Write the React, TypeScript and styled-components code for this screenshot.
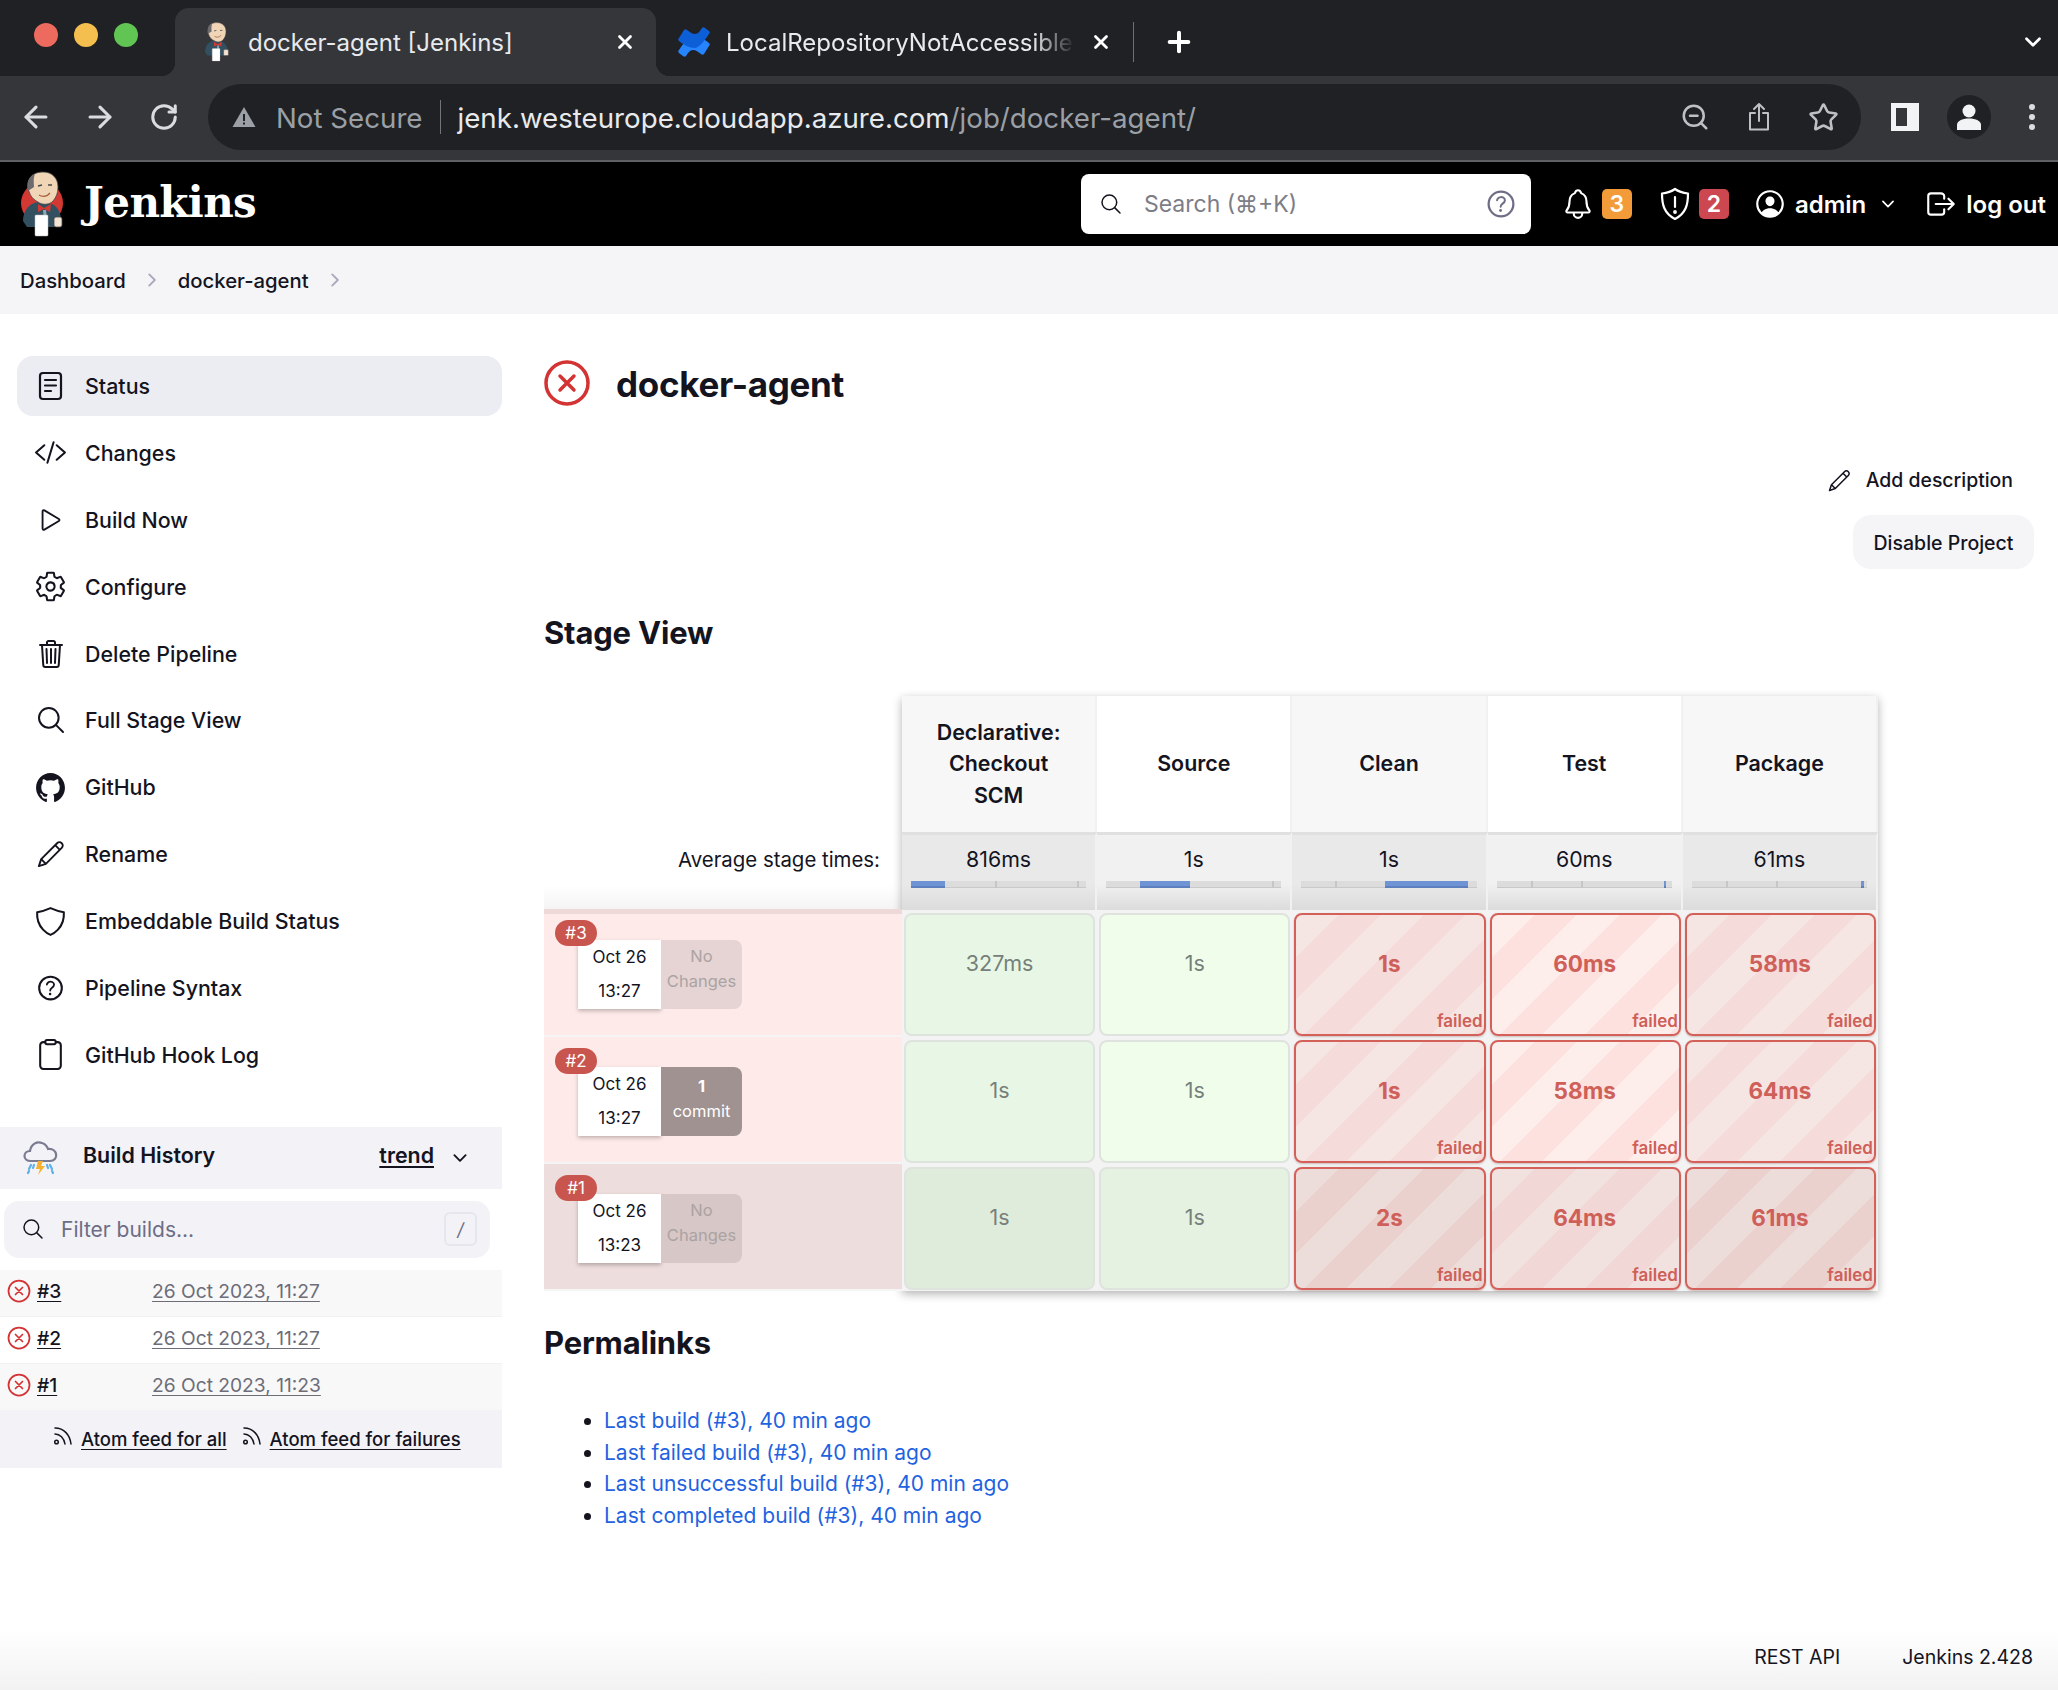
import React from 'react';
import styled, { createGlobalStyle } from 'styled-components';
import {
  IoCodeSlashOutline,
  IoPlayOutline,
  IoSettingsOutline,
  IoTrashOutline,
  IoSearchOutline,
  IoLogoGithub,
  IoShieldOutline,
  IoHelpCircleOutline,
  IoClipboardOutline,
  IoCloseCircleOutline,
  IoNotificationsOutline,
  IoPersonCircleOutline,
  IoLogOutOutline,
  IoChevronDownOutline,
  IoChevronForwardOutline,
} from 'react-icons/io5';
import { ArrowLeft, ArrowRight, RotateCw, ZoomOut, Star, X, Plus, ChevronDown } from 'lucide-react';

const GlobalStyle = createGlobalStyle`
  html, body {
    margin: 0;
    padding: 0;
    background: #fff;
  }
  body {
    font-family: Inter, "Liberation Sans", sans-serif;
    color: #14141f;
  }
  * {
    box-sizing: border-box;
  }
`;

const Page = styled.div`
  width: 2058px;
  height: 1690px;
  display: flex;
  flex-direction: column;
  overflow: hidden;
`;

// Browser chrome
const TabStrip = styled.div`
  height: 76px;
  flex: none;
  background: #202124;
  display: flex;
  align-items: flex-end;
  color: #fff;
`;

const TrafficLights = styled.div`
  width: 175px;
  height: 68px;
  flex: none;
  padding: 15px 0 0 34px;
  display: flex;
  gap: 16px;
`;

const Light = styled.span<{ $color: string }>`
  width: 24px;
  height: 24px;
  border-radius: 50%;
  background: ${(p) => p.$color};
`;

const ActiveTab = styled.div`
  position: relative;
  width: 481px;
  height: 68px;
  flex: none;
  padding: 0 20px 0 27px;
  background: #35363a;
  border-radius: 14px 14px 0 0;
  display: flex;
  align-items: center;
  gap: 16px;
  &::before,
  &::after {
    content: '';
    position: absolute;
    bottom: 0;
    width: 14px;
    height: 14px;
  }
  &::before {
    left: -14px;
    background: radial-gradient(circle at 0 0, #202124 14px, #35363a 14.5px);
  }
  &::after {
    right: -14px;
    background: radial-gradient(circle at 100% 0, #202124 14px, #35363a 14.5px);
  }
`;

const InactiveTab = styled.div`
  width: 477px;
  height: 68px;
  flex: none;
  padding: 0 21px 0 21px;
  display: flex;
  align-items: center;
  gap: 15px;
`;

const TabTitle = styled.span`
  flex: 1;
  min-width: 0;
  font-size: 24px;
  white-space: nowrap;
  overflow: hidden;
  color: #e8eaed;
`;

const FadedTabTitle = styled(TabTitle)`
  mask-image: linear-gradient(to right, #000 88%, transparent 100%);
`;

const TabSeparator = styled.span`
  width: 1px;
  height: 40px;
  margin-bottom: 14px;
  flex: none;
  background: #6e7075;
`;

const NewTab = styled.span`
  width: 90px;
  height: 68px;
  flex: none;
  display: flex;
  align-items: center;
  justify-content: center;
`;

const TabListChevron = styled.span`
  margin-left: auto;
  height: 68px;
  padding-right: 12px;
  display: flex;
  align-items: center;
`;

const Toolbar = styled.div`
  height: 86px;
  flex: none;
  padding: 8px 0 10px 20px;
  background: #35363a;
  border-bottom: 2px solid #5f6064;
  display: flex;
  align-items: stretch;
  color: #dadce0;
`;

const NavButton = styled.span`
  width: 64px;
  margin-left: -16px;
  margin-right: 16px;
  flex: none;
  display: flex;
  align-items: center;
  justify-content: center;
`;

const Omnibox = styled.div`
  width: 1653px;
  flex: none;
  margin-left: -4px;
  border-radius: 34px;
  background: #202124;
  padding: 0 22px 0 24px;
  display: flex;
  align-items: center;
  font-size: 27.7px;
  white-space: nowrap;
`;

const NotSecure = styled.span`
  margin: 1px 0 0 20px;
  color: #9aa0a6;
`;

const OmniDivider = styled.span`
  width: 1px;
  height: 34px;
  margin: 0 17px;
  background: #70757a;
`;

const UrlHost = styled.span`
  margin-top: 1px;
  color: #e8eaed;
`;

const UrlPath = styled.span`
  margin-top: 1px;
  color: #9aa0a6;
`;

const OmniActions = styled.span`
  margin-left: auto;
  display: flex;
  align-items: center;
  gap: 37px;
  color: #bdc1c6;
`;

const ToolbarRight = styled.div`
  margin-left: 30px;
  display: flex;
  align-items: center;
  gap: 28px;
`;

const ProfileCircle = styled.span`
  width: 44px;
  height: 44px;
  border-radius: 50%;
  background: #202124;
  display: flex;
  align-items: center;
  justify-content: center;
`;

const DotsSlot = styled.span`
  margin-left: 9px;
  display: flex;
`;

// Jenkins header
const Header = styled.header`
  height: 84px;
  flex: none;
  background: #000;
  color: #fff;
  display: flex;
  align-items: center;
  padding: 0 12px 0 18px;
`;

const BrandName = styled.span`
  margin: -3px 0 0 16px;
  font-family: "DejaVu Serif", "Liberation Serif", serif;
  font-weight: 700;
  font-size: 42px;
  letter-spacing: -0.6px;
`;

const SearchBox = styled.div`
  margin-left: auto;
  margin-right: 30px;
  width: 450px;
  height: 60px;
  border-radius: 8px;
  background: #fff;
  padding: 0 12px 0 18px;
  display: flex;
  align-items: center;
  gap: 21px;
  color: #14141f;
`;

const SearchHint = styled.span`
  flex: 1;
  font-size: 23px;
  color: #7d7d85;
`;

const HeaderGroup = styled.div<{ $after?: number; $gap?: number }>`
  display: flex;
  align-items: center;
  gap: ${(p) => p.$gap ?? 8}px;
  margin-right: ${(p) => p.$after ?? 0}px;
  font-size: 24px;
  font-weight: 600;
`;

const MenuChevron = styled.span`
  margin-left: 5px;
  display: flex;
`;

const CountBadge = styled.span<{ $color: string }>`
  width: 30px;
  height: 30px;
  border-radius: 5px;
  background: ${(p) => p.$color};
  display: flex;
  align-items: center;
  justify-content: center;
  font-size: 23px;
  font-weight: 600;
`;

const Breadcrumbs = styled.nav`
  height: 68px;
  flex: none;
  background: #f5f5f7;
  padding-left: 20px;
  display: flex;
  align-items: center;
  font-size: 20.3px;
  font-weight: 450;
`;

const CrumbSep = styled.span`
  width: 52px;
  display: flex;
  justify-content: center;
  color: #a9a9bd;
`;

// Page body
const Body = styled.div`
  flex: 1;
  min-height: 0;
  display: flex;
`;

const Sidebar = styled.aside`
  width: 502px;
  flex: none;
  padding-top: 42px;
`;

const Nav = styled.nav`
  margin-left: 17px;
  display: flex;
  flex-direction: column;
  gap: 6.9px;
`;

const NavItem = styled.a<{ $active?: boolean }>`
  height: 60px;
  padding-left: 17px;
  display: flex;
  align-items: center;
  gap: 18px;
  border-radius: 16px;
  background: ${(p) => (p.$active ? '#ecedf2' : 'transparent')};
  font-size: 21.4px;
  font-weight: 500;
  color: #14141f;
`;

const NavIcon = styled.span`
  width: 33px;
  height: 33px;
  flex: none;
  display: flex;
  align-items: center;
  justify-content: center;
`;

const HistoryBar = styled.div`
  margin-top: 42px;
  height: 62px;
  padding: 0 32px 0 23px;
  background: #f2f2f7;
  display: flex;
  align-items: center;
  font-size: 21.4px;
  font-weight: 600;
`;

const HistoryTitle = styled.span`
  margin: -5px 0 0 24px;
`;

const TrendLink = styled.a`
  margin: -5px 16px 0 auto;
  text-decoration: underline;
  text-underline-offset: 3px;
`;

const FilterBox = styled.div`
  width: 486px;
  height: 57px;
  margin: 12px 0 12px 4px;
  padding: 0 13px 0 17px;
  border-radius: 15px;
  background: #f2f2f7;
  display: flex;
  align-items: center;
  gap: 16px;
`;

const FilterHint = styled.span`
  flex: 1;
  font-size: 21px;
  color: #6d6d85;
`;

const SlashKey = styled.span`
  width: 33px;
  height: 34px;
  border: 2px solid #e6e6ef;
  border-radius: 6px;
  display: flex;
  align-items: center;
  justify-content: center;
  font-size: 18px;
  font-style: italic;
  color: #6d6d85;
`;

const BuildRow = styled.div<{ $shaded: boolean }>`
  height: 47px;
  padding: 0 0 3px 5px;
  display: flex;
  align-items: center;
  background: ${(p) => (p.$shaded ? '#f8f8f8' : '#fff')};
  border-bottom: 1px solid #f2f2f4;
  font-size: 19.2px;
`;

const BuildLink = styled.a`
  width: 115px;
  margin-left: 4px;
  font-weight: 500;
  text-decoration: underline;
  text-underline-offset: 3px;
`;

const BuildDate = styled.a`
  color: #6d6d78;
  text-decoration: underline;
  text-underline-offset: 3px;
`;

const FeedBar = styled.div`
  height: 57px;
  padding-left: 53px;
  background: #f2f2f7;
  display: flex;
  align-items: center;
  font-size: 18.5px;
  font-weight: 450;
`;

const FeedLink = styled.a<{ $gap?: number }>`
  margin-left: 8px;
  margin-right: ${(p) => p.$gap ?? 0}px;
  text-decoration: underline;
  text-underline-offset: 3px;
`;

const FeedGlyph = styled.span`
  margin-top: -7px;
  display: flex;
`;

const Main = styled.main`
  margin-left: 42px;
  flex: 1;
  min-width: 0;
  padding: 47px 24px 0 0;
`;

const TitleRow = styled.div`
  height: 44px;
  display: flex;
  align-items: center;
  gap: 27px;
`;

const TitleGlyph = styled.span`
  width: 45px;
  display: flex;
  justify-content: center;
`;

const JobTitle = styled.h1`
  margin: 2px 0 0;
  font-size: 35px;
  font-weight: 700;
  letter-spacing: -0.3px;
`;

const AddDescription = styled.a`
  margin-top: 60px;
  height: 30px;
  padding-right: 21px;
  display: flex;
  justify-content: flex-end;
  align-items: center;
  gap: 15px;
  font-size: 19.4px;
  font-weight: 450;
`;

const ActionRow = styled.div`
  margin-top: 20px;
  display: flex;
  justify-content: flex-end;
`;

const DisableButton = styled.button`
  width: 181px;
  height: 54px;
  padding-top: 2px;
  border: none;
  border-radius: 18px;
  background: #f5f5f7;
  color: #14141f;
  font-family: inherit;
  font-size: 19.5px;
  font-weight: 450;
`;

const SectionTitle = styled.h2<{ $top: number }>`
  margin: ${(p) => p.$top}px 0 0;
  height: 40px;
  line-height: 40px;
  font-size: 31px;
  font-weight: 700;
  letter-spacing: -0.2px;
`;

// Stage view
const StageView = styled.div`
  margin-top: 43px;
  display: flex;
`;

const BuildColumn = styled.div`
  width: 358px;
  flex: none;
`;

const HeaderSpacer = styled.div`
  height: 136px;
`;

const AverageLabel = styled.div`
  height: 77px;
  padding: 15px 22px 0 0;
  text-align: right;
  font-size: 20.4px;
  background: linear-gradient(to bottom, #fff 70%, #f4f4f4 100%);
`;

const BuildHead = styled.div<{ $tone: string; $first: boolean }>`
  position: relative;
  height: ${(p) => (p.$first ? 128 : 127)}px;
  padding: ${(p) => (p.$first ? 26 : 30)}px 0 0 34px;
  background: ${(p) => p.$tone};
  border-top: ${(p) => (p.$first ? '5px solid #ecd9d8' : 'none')};
  border-bottom: 2px solid #f5f5f5;
  display: flex;
  align-items: flex-start;
`;

const BuildBadge = styled.span<{ $first: boolean }>`
  position: absolute;
  left: 11px;
  top: ${(p) => (p.$first ? 6 : 11)}px;
  width: 42px;
  height: 26px;
  border-radius: 13px;
  background: #c8564f;
  color: #fff;
  font-size: 17px;
  display: flex;
  align-items: center;
  justify-content: center;
  z-index: 1;
`;

const DateBox = styled.div`
  width: 83px;
  height: 69px;
  background: #fff;
  box-shadow: 0 2px 4px rgba(0, 0, 0, 0.25);
  display: flex;
  flex-direction: column;
  align-items: center;
  font-size: 17px;
  line-height: 34px;
`;

const ChangesBox = styled.div<{ $bg: string; $strong?: boolean }>`
  width: 81px;
  height: 69px;
  padding-top: ${(p) => (p.$strong ? 7 : 4)}px;
  background: ${(p) => p.$bg};
  border-radius: 0 8px 8px 0;
  color: ${(p) => (p.$strong ? '#fff' : '#aba3a2')};
  font-size: 16.5px;
  line-height: 25px;
  text-align: center;
`;

const StagePanel = styled.div`
  width: 976px;
  flex: none;
  display: grid;
  grid-template-columns: repeat(5, 1fr);
  grid-template-rows: 136px 78px repeat(3, 127px);
  background: #f3f3f3;
  box-shadow: 0 3px 9px rgba(0, 0, 0, 0.3);
`;

const StageHead = styled.div<{ $odd: boolean }>`
  padding: 0 30px;
  background: ${(p) => (p.$odd ? '#f7f7f7' : '#fff')};
  border-right: 2px solid #f1f1f1;
  display: flex;
  align-items: center;
  justify-content: center;
  text-align: center;
  font-size: 21.4px;
  font-weight: 600;
  line-height: 31.5px;
`;

const AvgCell = styled.div<{ $odd: boolean }>`
  padding: 11px 9px 0;
  border-top: 3px solid #e0e0e0;
  border-right: 2px solid #f1f1f1;
  background: linear-gradient(
    to bottom,
    ${(p) => (p.$odd ? '#e9e9e9' : '#f1f1f1')} 65%,
    #dcdcdc 100%
  );
  text-align: center;
  font-size: 21.3px;
`;

const TimeBar = styled.div`
  position: relative;
  height: 7px;
  margin-top: 9px;
  background: #dcdcdc;
  box-shadow: inset 0 -1px 0 #c9c9c9;
`;

const TimeFill = styled.span<{ $left: number; $width: number }>`
  position: absolute;
  top: 0;
  bottom: 0;
  left: ${(p) => p.$left}px;
  width: ${(p) => p.$width}px;
  background: #6f94d6;
  box-shadow: inset 0 -2px 0 #5d7fbd;
`;

const TimeTick = styled.span<{ $left: number }>`
  position: absolute;
  top: 0;
  bottom: 0;
  left: ${(p) => p.$left}px;
  width: 2px;
  background: #c6c6c6;
`;

const CellSlot = styled.div`
  padding: 3px 2px 1px;
  min-width: 0;
`;

const SuccessCell = styled.div<{ $bg: string }>`
  height: 123px;
  padding-top: 35px;
  border-radius: 8px;
  background: ${(p) => p.$bg};
  border: 2px solid #dfe3dd;
  text-align: center;
  font-size: 21.5px;
  color: #76807a;
`;

const FailedCell = styled.div<{ $a: string; $b: string }>`
  height: 123px;
  padding: 35px 1px 1px 0;
  border-radius: 8px;
  background: repeating-linear-gradient(135deg, ${(p) => p.$a} 0 30px, ${(p) => p.$b} 30px 60px);
  border: 2px solid #d4605a;
  box-shadow: 0 1px 2px rgba(120, 60, 60, 0.3);
  display: flex;
  flex-direction: column;
  color: #cf5f59;
  font-weight: 600;
`;

const FailedTime = styled.span`
  text-align: center;
  font-size: 22.5px;
  font-weight: 700;
`;

const FailedLabel = styled.span`
  margin-top: auto;
  text-align: right;
  font-size: 17px;
  line-height: 24px;
`;

// Permalinks + footer
const LinkList = styled.ul`
  margin: 42px 0 0;
  padding-left: 60px;
  font-size: 21px;
  line-height: 31.5px;
`;

const PermaLink = styled.a`
  color: #1f63e0;
`;

const Footer = styled.footer`
  height: 60px;
  flex: none;
  padding: 0 25px 6px 0;
  background: linear-gradient(to bottom, #fff 0%, #f2f2f2 100%);
  display: flex;
  align-items: center;
  justify-content: flex-end;
  gap: 62px;
  font-size: 19.5px;
`;

const StatusIcon = () => (
  <svg width="25" height="30" viewBox="0 0 25 30" fill="none" stroke="currentColor" strokeWidth="2.2" strokeLinecap="round">
    <rect x="2" y="2" width="21" height="26" rx="3" />
    <path d="M7 9h11M7 14.5h11M7 20h6" />
  </svg>
);

const PencilIcon = ({ size }: { size: number }) => (
  <svg width={size} height={size} viewBox="0 0 30 30" fill="none" stroke="currentColor" strokeWidth="2" strokeLinejoin="round">
    <path d="M2 28l2.5-7.5L21.500 3.500c1.500-1.500 3.500-1.500 5 0s1.500 3.500 0 5L9.500 25.500z" />
    <path d="M4.500 20.500l5 5M19.500 5.500l5 5" />
  </svg>
);

const AlertShield = () => (
  <svg width="32" height="34" viewBox="0 0 32 34" fill="none" stroke="currentColor" strokeWidth="2.2" strokeLinecap="round" strokeLinejoin="round">
    <path d="M16 2c4 3 8 4 13 4.500 0 11-2 20-13 25.500C5 26.500 3 17.500 3 6.500 8 6 12 5 16 2z" />
    <path d="M16 10v10" />
    <circle cx="16" cy="25" r="0.8" fill="currentColor" />
  </svg>
);

const JenkinsLogo = ({ size, circle }: { size: number; circle?: boolean }) => (
  <svg width={size} height={size * 1.32} viewBox="0 0 50 66">
    {circle && <circle cx="24" cy="32" r="21" fill="#d33833" />}
    <path d="M5 50c0-11 7-18 15-19l14 2c6 3 9 9 9 17l-3 6H9z" fill="#335061" />
    <path d="M10 14C10 5 17 1 25 1c9 0 15 6 15 15 0 6-2 11-6 15-4 3-10 3-14 0-6-3-10-9-10-17z" fill="#f0d6b7" stroke="#49484a" strokeWidth="0.8" />
    <path d="M10 20C8 13 10 6 17 3c-2 5-1 9-1 13-1 1-4 2-6 4z" fill="#6d6b6d" />
    <path d="M20 15l4-1M30 14l4 0" stroke="#49484a" strokeWidth="1.3" fill="none" />
    <path d="M21 24c3 2 8 2 11-2" stroke="#a5633f" strokeWidth="1.3" fill="none" />
    <path d="M20 33l6 4 7-4-1 8-6-3-6 3z" fill="#d33833" />
    <path d="M25 39l3 0 1 9-3 2z" fill="#8fa6b3" />
    <rect x="17" y="44" width="13" height="21" rx="1" fill="#fff" stroke="#bbb" strokeWidth="0.5" />
    <rect x="36" y="46" width="8" height="10" rx="2" fill="#f3e3d2" stroke="#49484a" strokeWidth="0.8" />
  </svg>
);

const ConfluenceLogo = () => (
  <svg width="34" height="34" viewBox="0 0 34 34">
    <path d="M2 25c6-9 11-14 14-14 6 0 11 3 16 7 1 1 1 2 0 3l-5 8c-1 1-2 1-3 0-3-2-5-4-8-4-3 0-5 3-7 6-1 1-2 1-3 0l-4-3c-1-1-1-2 0-3z" fill="#2684ff" />
    <path d="M32 9c-6 9-11 14-14 14-6 0-11-3-16-7-1-1-1-2 0-3l5-8c1-1 2-1 3 0 3 2 5 4 8 4 3 0 5-3 7-6 1-1 2-1 3 0l4 3c1 1 1 2 0 3z" fill="#0d5fd8" />
  </svg>
);

const WarningIcon = () => (
  <svg width="24" height="22" viewBox="0 0 24 22">
    <path d="M12 1L23.500 21H.5z" fill="#9aa0a6" />
    <rect x="11" y="8" width="2" height="7" fill="#202124" />
    <rect x="11" y="16.500" width="2" height="2" fill="#202124" />
  </svg>
);

const ShareIcon = () => (
  <svg width="24" height="30" viewBox="0 0 24 30" fill="none" stroke="currentColor" strokeWidth="2" strokeLinecap="round" strokeLinejoin="round">
    <path d="M8 11H3v16.500h18V11h-5" />
    <path d="M12 19V2M7 7l5-5 5 5" />
  </svg>
);

const SidePanelIcon = () => (
  <svg width="28" height="28" viewBox="0 0 28 28">
    <path fillRule="evenodd" d="M0 0h28v28H0zM5 5v18h11V5z" fill="#f1f3f4" />
  </svg>
);

const PersonIcon = () => (
  <svg width="24" height="26" viewBox="0 0 24 26" fill="#f1f3f4">
    <circle cx="12" cy="7" r="6.500" />
    <path d="M0 26v-5c0-4 5-6.500 12-6.500s12 2.500 12 6.500v5z" />
  </svg>
);

const DotsIcon = () => (
  <svg width="8" height="28" viewBox="0 0 8 28" fill="#dadce0">
    <circle cx="4" cy="4" r="3" />
    <circle cx="4" cy="14" r="3" />
    <circle cx="4" cy="24" r="3" />
  </svg>
);

const WeatherIcon = () => (
  <svg width="36" height="36" viewBox="0 0 36 36">
    <path d="M8 21c-9 0-8-10-1-10C8 4 14 1 19 3c3 1 5 3 6 6 10-1 11 12 2 12z" fill="none" stroke="#7a7a90" strokeWidth="2.2" />
    <path d="M15 21l-2 8h4l-2 6 7-9h-4l2-5z" fill="#f5b02e" />
    <path d="M8 25l-2 4M6 31l-1 2M27 25l2 4M29 31l1 2M11 25l-1 3M24 25l1 3" stroke="#5bb0ea" strokeWidth="2.2" strokeLinecap="round" />
  </svg>
);

const FeedIcon = () => (
  <FeedGlyph>
    <svg width="20" height="20" viewBox="0 0 20 20" fill="none" stroke="#14141f" strokeWidth="1.5" strokeLinecap="round">
      <circle cx="3.5" cy="16" r="1.8" />
      <path d="M2 8c5 0 9 4 10 10M2 2c9 0 15 7 16 16" />
    </svg>
  </FeedGlyph>
);

const navItems: { label: string; icon: React.ReactNode; active?: boolean }[] = [
  { label: 'Status', icon: <StatusIcon />, active: true },
  { label: 'Changes', icon: <IoCodeSlashOutline size={33} /> },
  { label: 'Build Now', icon: <IoPlayOutline size={30} /> },
  { label: 'Configure', icon: <IoSettingsOutline size={33} /> },
  { label: 'Delete Pipeline', icon: <IoTrashOutline size={32} /> },
  { label: 'Full Stage View', icon: <IoSearchOutline size={32} /> },
  { label: 'GitHub', icon: <IoLogoGithub size={33} /> },
  { label: 'Rename', icon: <PencilIcon size={28} /> },
  { label: 'Embeddable Build Status', icon: <IoShieldOutline size={33} /> },
  { label: 'Pipeline Syntax', icon: <IoHelpCircleOutline size={36} /> },
  { label: 'GitHub Hook Log', icon: <IoClipboardOutline size={33} /> },
];

const builds = [
  { id: '#3', date: '26 Oct 2023, 11:27' },
  { id: '#2', date: '26 Oct 2023, 11:27' },
  { id: '#1', date: '26 Oct 2023, 11:23' },
];

const stages = [
  { name: 'Declarative: Checkout SCM', avg: '816ms', left: 0, width: 34, ticks: [84, 166] },
  { name: 'Source', avg: '1s', left: 34, width: 50, ticks: [166] },
  { name: 'Clean', avg: '1s', left: 84, width: 83, ticks: [34] },
  { name: 'Test', avg: '60ms', left: 167, width: 2, ticks: [34, 84] },
  { name: 'Package', avg: '61ms', left: 169, width: 3, ticks: [34, 84] },
];

const runs = [
  { id: '#3', date: 'Oct 26', time: '13:27', changes: ['No', 'Changes'], tone: '#feebe9', box: '#e5d4d3', times: ['327ms', '1s', '1s', '60ms', '58ms'] },
  { id: '#2', date: 'Oct 26', time: '13:27', changes: ['1', 'commit'], tone: '#feebe9', box: '#9f9291', strong: true, times: ['1s', '1s', '1s', '58ms', '64ms'] },
  { id: '#1', date: 'Oct 26', time: '13:23', changes: ['No', 'Changes'], tone: '#eddddc', box: '#d7c7c6', times: ['1s', '1s', '2s', '64ms', '61ms'] },
];

const permalinks = [
  'Last build (#3), 40 min ago',
  'Last failed build (#3), 40 min ago',
  'Last unsuccessful build (#3), 40 min ago',
  'Last completed build (#3), 40 min ago',
];

const successBg = (dark: boolean, odd: boolean) =>
  dark ? (odd ? '#dfecdb' : '#e6f2e1') : odd ? '#e8f7e5' : '#f1fdeb';

const failedBg = (dark: boolean, odd: boolean): [string, string] => {
  if (dark) return odd ? ['#ecdcda', '#ebd1ce'] : ['#f1e2e0', '#f1d8d6'];
  return odd ? ['#f5e5e3', '#f5dbd9'] : ['#fdeeec', '#fce1de'];
};

const App: React.FC = () => {
  return (
    <Page>
      <GlobalStyle />
      <TabStrip>
        <TrafficLights>
          <Light $color="#ed6a5e" />
          <Light $color="#f5bf4f" />
          <Light $color="#61c554" />
        </TrafficLights>
        <ActiveTab>
          <JenkinsLogo size={30} />
          <TabTitle>docker-agent [Jenkins]</TabTitle>
          <X size={22} strokeWidth={3} />
        </ActiveTab>
        <InactiveTab>
          <ConfluenceLogo />
          <FadedTabTitle>LocalRepositoryNotAccessible</FadedTabTitle>
          <X size={22} strokeWidth={3} />
        </InactiveTab>
        <TabSeparator />
        <NewTab>
          <Plus size={32} strokeWidth={3} />
        </NewTab>
        <TabListChevron>
          <ChevronDown size={26} strokeWidth={2.5} />
        </TabListChevron>
      </TabStrip>
      <Toolbar>
        <NavButton>
          <ArrowLeft size={34} strokeWidth={2.2} />
        </NavButton>
        <NavButton>
          <ArrowRight size={34} strokeWidth={2.2} />
        </NavButton>
        <NavButton>
          <RotateCw size={30} strokeWidth={2.4} />
        </NavButton>
        <Omnibox>
          <WarningIcon />
          <NotSecure>Not Secure</NotSecure>
          <OmniDivider />
          <UrlHost>jenk.westeurope.cloudapp.azure.com</UrlHost>
          <UrlPath>/job/docker-agent/</UrlPath>
          <OmniActions>
            <ZoomOut size={30} strokeWidth={2} />
            <ShareIcon />
            <Star size={31} strokeWidth={2} />
          </OmniActions>
        </Omnibox>
        <ToolbarRight>
          <SidePanelIcon />
          <ProfileCircle>
            <PersonIcon />
          </ProfileCircle>
          <DotsSlot>
            <DotsIcon />
          </DotsSlot>
        </ToolbarRight>
      </Toolbar>
      <Header>
        <JenkinsLogo size={50} circle />
        <BrandName>Jenkins</BrandName>
        <SearchBox>
          <IoSearchOutline size={24} />
          <SearchHint>Search (⌘+K)</SearchHint>
          <IoHelpCircleOutline size={36} color="#6d6d85" />
        </SearchBox>
        <HeaderGroup $after={27} $gap={7}>
          <IoNotificationsOutline size={34} />
          <CountBadge $color="#f29b38">3</CountBadge>
        </HeaderGroup>
        <HeaderGroup $after={24}>
          <AlertShield />
          <CountBadge $color="#cc4750">2</CountBadge>
        </HeaderGroup>
        <HeaderGroup $after={27}>
          <IoPersonCircleOutline size={34} />
          admin
          <MenuChevron>
            <IoChevronDownOutline size={18} />
          </MenuChevron>
        </HeaderGroup>
        <HeaderGroup>
          <IoLogOutOutline size={34} />
          log out
        </HeaderGroup>
      </Header>
      <Breadcrumbs>
        Dashboard
        <CrumbSep>
          <IoChevronForwardOutline size={20} />
        </CrumbSep>
        docker-agent
        <CrumbSep>
          <IoChevronForwardOutline size={20} />
        </CrumbSep>
      </Breadcrumbs>
      <Body>
        <Sidebar>
          <Nav>
            {navItems.map((item) => (
              <NavItem key={item.label} $active={item.active}>
                <NavIcon>{item.icon}</NavIcon>
                {item.label}
              </NavItem>
            ))}
          </Nav>
          <HistoryBar>
            <WeatherIcon />
            <HistoryTitle>Build History</HistoryTitle>
            <TrendLink>trend</TrendLink>
            <IoChevronDownOutline size={20} />
          </HistoryBar>
          <FilterBox>
            <IoSearchOutline size={24} />
            <FilterHint>Filter builds...</FilterHint>
            <SlashKey>/</SlashKey>
          </FilterBox>
          {builds.map((build, i) => (
            <BuildRow key={build.id} $shaded={i % 2 === 0}>
              <IoCloseCircleOutline size={28} color="#d33333" />
              <BuildLink>{build.id}</BuildLink>
              <BuildDate>{build.date}</BuildDate>
            </BuildRow>
          ))}
          <FeedBar>
            <FeedIcon />
            <FeedLink $gap={15}>Atom feed for all</FeedLink>
            <FeedIcon />
            <FeedLink>Atom feed for failures</FeedLink>
          </FeedBar>
        </Sidebar>
        <Main>
          <TitleRow>
            <TitleGlyph>
              <IoCloseCircleOutline size={56} color="#d33333" style={{ flex: 'none' }} />
            </TitleGlyph>
            <JobTitle>docker-agent</JobTitle>
          </TitleRow>
          <AddDescription>
            <PencilIcon size={23} />
            Add description
          </AddDescription>
          <ActionRow>
            <DisableButton>Disable Project</DisableButton>
          </ActionRow>
          <SectionTitle $top={44}>Stage View</SectionTitle>
          <StageView>
            <BuildColumn>
              <HeaderSpacer />
              <AverageLabel>Average stage times:</AverageLabel>
              {runs.map((run, i) => (
                <BuildHead key={run.id} $tone={run.tone} $first={i === 0}>
                  <BuildBadge $first={i === 0}>{run.id}</BuildBadge>
                  <DateBox>
                    <span>{run.date}</span>
                    <span>{run.time}</span>
                  </DateBox>
                  <ChangesBox $bg={run.box} $strong={run.strong}>
                    {run.strong ? <strong>{run.changes[0]}</strong> : run.changes[0]}
                    <br />
                    {run.changes[1]}
                  </ChangesBox>
                </BuildHead>
              ))}
            </BuildColumn>
            <StagePanel>
              {stages.map((stage, c) => (
                <StageHead key={stage.name} $odd={c % 2 === 0}>
                  {stage.name}
                </StageHead>
              ))}
              {stages.map((stage, c) => (
                <AvgCell key={stage.name} $odd={c % 2 === 0}>
                  {stage.avg}
                  <TimeBar>
                    {stage.ticks.map((tick) => (
                      <TimeTick key={tick} $left={tick} />
                    ))}
                    <TimeFill $left={stage.left} $width={stage.width} />
                  </TimeBar>
                </AvgCell>
              ))}
              {runs.map((run, r) =>
                run.times.map((time, c) => {
                  const dark = r === 2;
                  const odd = c % 2 === 0;
                  const [a, b] = failedBg(dark, odd);
                  return (
                    <CellSlot key={`${run.id}-${c}`}>
                      {c < 2 ? (
                        <SuccessCell $bg={successBg(dark, odd)}>{time}</SuccessCell>
                      ) : (
                        <FailedCell $a={a} $b={b}>
                          <FailedTime>{time}</FailedTime>
                          <FailedLabel>failed</FailedLabel>
                        </FailedCell>
                      )}
                    </CellSlot>
                  );
                }),
              )}
            </StagePanel>
          </StageView>
          <SectionTitle $top={32}>Permalinks</SectionTitle>
          <LinkList>
            {permalinks.map((link) => (
              <li key={link}>
                <PermaLink>{link}</PermaLink>
              </li>
            ))}
          </LinkList>
        </Main>
      </Body>
      <Footer>
        <span>REST API</span>
        <span>Jenkins 2.428</span>
      </Footer>
    </Page>
  );
};

export default App;
